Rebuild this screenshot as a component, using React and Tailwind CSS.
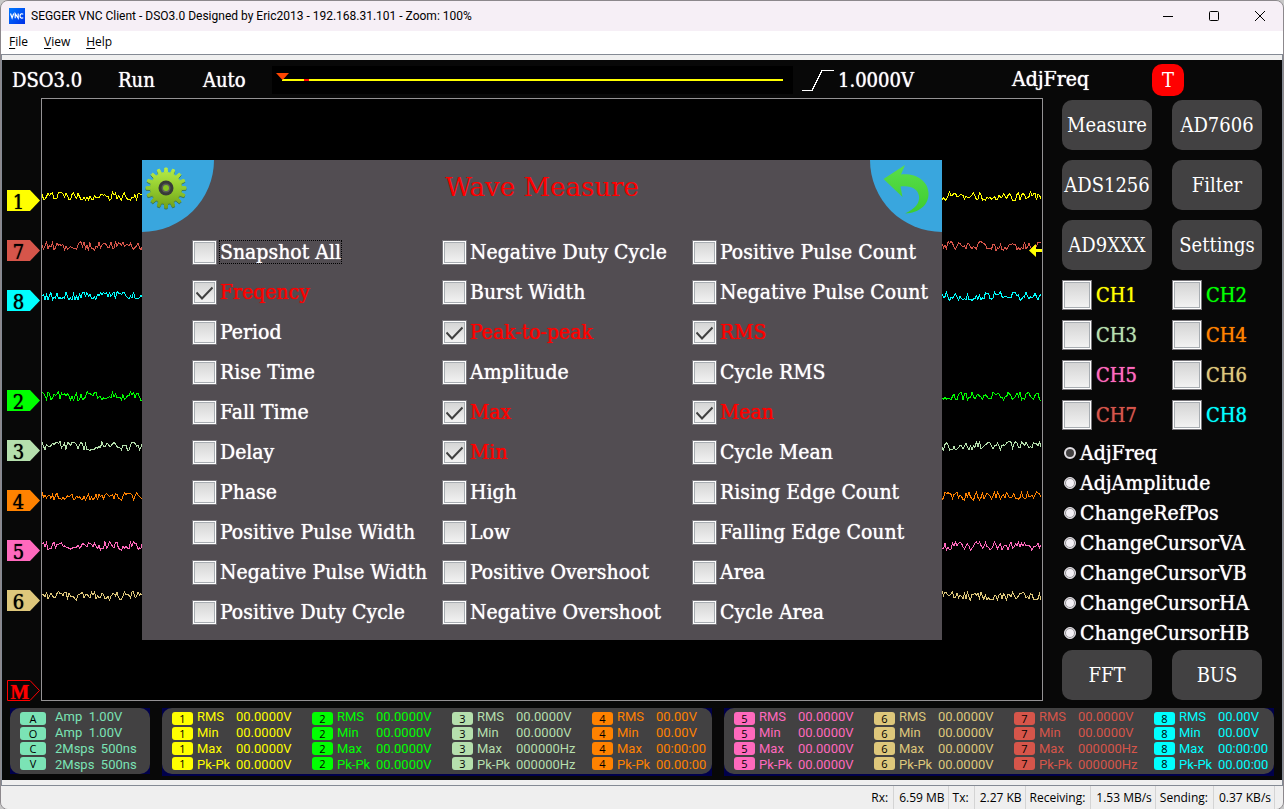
import { useState } from 'react'
import clsx from 'clsx'

const SERIF = "font-['DejaVu_Serif_Condensed','DejaVu_Serif',serif] [text-shadow:0_0_1px]"

const CHANNELS = [
  { id: 1, text: 'text-[#ffff00]', bg: 'bg-[#ffff00]', rows: ['00.0000V', '00.0000V', '00.0000V', '00.0000V'] },
  { id: 2, text: 'text-[#00ff00]', bg: 'bg-[#00ff00]', rows: ['00.0000V', '00.0000V', '00.0000V', '00.0000V'] },
  { id: 3, text: 'text-[#b5dfad]', bg: 'bg-[#b5dfad]', rows: ['00.0000V', '00.0000V', '000000Hz', '000000Hz'] },
  { id: 4, text: 'text-[#ff8200]', bg: 'bg-[#ff8200]', rows: ['00.00V', '00.00V', '00:00:00', '00.00:00'] },
  { id: 5, text: 'text-[#ff69bd]', bg: 'bg-[#ff69bd]', rows: ['00.0000V', '00.0000V', '00.0000V', '00.0000V'] },
  { id: 6, text: 'text-[#dec77b]', bg: 'bg-[#dec77b]', rows: ['00.0000V', '00.0000V', '00.0000V', '00.0000V'] },
  { id: 7, text: 'text-[#d6554a]', bg: 'bg-[#d6554a]', rows: ['00.0000V', '00.0000V', '000000Hz', '000000Hz'] },
  { id: 8, text: 'text-[#00ffff]', bg: 'bg-[#00ffff]', rows: ['00.00V', '00.00V', '00:00:00', '00.00:00'] },
]

// Vertical order of the traces on the screen, null leaves a slot empty
const TRACE_ORDER = [1, 7, 8, null, 2, 3, 4, 5, 6]

const MEASURES = [
  ['Snapshot All', 'Freqency', 'Period', 'Rise Time', 'Fall Time', 'Delay', 'Phase', 'Positive Pulse Width', 'Negative Pulse Width', 'Positive Duty Cycle'],
  ['Negative Duty Cycle', 'Burst Width', 'Peak-to-peak', 'Amplitude', 'Max', 'Min', 'High', 'Low', 'Positive Overshoot', 'Negative Overshoot'],
  ['Positive Pulse Count', 'Negative Pulse Count', 'RMS', 'Cycle RMS', 'Mean', 'Cycle Mean', 'Rising Edge Count', 'Falling Edge Count', 'Area', 'Cycle Area'],
]

const MODES = ['AdjFreq', 'AdjAmplitude', 'ChangeRefPos', 'ChangeCursorVA', 'ChangeCursorVB', 'ChangeCursorHA', 'ChangeCursorHB']

const STATUS = [
  ['Rx:', '6.59 MB'],
  ['Tx:', '2.27 KB'],
  ['Receiving:', '1.53 MB/s'],
  ['Sending:', '0.37 KB/s'],
]

const channel = (id) => CHANNELS.find((c) => c.id === id)

// Small noise generator, so each trace keeps its shape between renders
function noisePoints(seed) {
  let s = seed * 7919 + 17
  let y = 5
  const points = []
  for (let x = 0; x <= 1000; x += 1.5) {
    s = (s * 16807) % 2147483647
    y += (s / 2147483647 - 0.5) * 15
    if (y < 0.5) y = 1 - y
    if (y > 9.5) y = 19 - y
    points.push(`${x},${y.toFixed(1)}`)
  }
  return points.join(' ')
}

function gearPath(teeth, outer, inner) {
  const pts = []
  const step = (Math.PI * 2) / teeth
  for (let i = 0; i < teeth; i++) {
    const a = i * step - Math.PI / 2
    for (const [r, d] of [[inner, -0.26], [outer, -0.15], [outer, 0.15], [inner, 0.26]]) {
      pts.push(`${(24 + r * Math.cos(a + d * step)).toFixed(2)} ${(24 + r * Math.sin(a + d * step)).toFixed(2)}`)
    }
  }
  return `M${pts.join('L')}Z`
}

function TitleBar() {
  return (
    <header className="flex h-[30px] items-center bg-[#f6eff6] pl-2 text-xs text-black">
      <svg className="h-4 w-4" viewBox="0 0 16 16">
        <defs>
          <linearGradient id="vnc" x1="0" y1="0" x2="1" y2="1">
            <stop offset="0" stopColor="#0078ff" />
            <stop offset="1" stopColor="#0030e8" />
          </linearGradient>
        </defs>
        <rect width="16" height="16" fill="url(#vnc)" />
        <path d="M1.500 5.500l1.600 4.500 1.600-4.500M6.200 10.300V5.700l3 4.300V5.500M14.200 6.300c-1-1-3.200-.7-3.200 1.600s2.200 2.700 3.200 1.700" fill="none" stroke="#fff" strokeWidth="1.200" />
      </svg>
      <h1 className="ml-[6px] flex-1 whitespace-nowrap font-['Roboto',sans-serif]">SEGGER VNC Client - DSO3.0 Designed by Eric2013 - 192.168.31.101 - Zoom: 100%</h1>
      <button aria-label="Minimize" className="flex h-full w-[46px] items-center justify-center">
        <svg className="h-[10px] w-[10px]" viewBox="0 0 10 10" stroke="#000"><path d="M0 5.500h10" /></svg>
      </button>
      <button aria-label="Maximize" className="flex h-full w-[46px] items-center justify-center">
        <svg className="h-[10px] w-[10px]" viewBox="0 0 10 10" fill="none" stroke="#000"><rect x=".5" y=".5" width="9" height="9" rx="1" /></svg>
      </button>
      <button aria-label="Close" className="flex h-full w-[46px] items-center justify-center">
        <svg className="h-[10px] w-[10px]" viewBox="0 0 10 10" stroke="#000"><path d="M0 0l10 10M10 0L0 10" /></svg>
      </button>
    </header>
  )
}

function MenuBar() {
  return (
    <nav className="flex h-[23px] items-center gap-4 bg-white pb-px pl-2 text-xs text-black">
      {['File', 'View', 'Help'].map((name) => (
        <button key={name}>
          <span className="underline underline-offset-2">{name[0]}</span>{name.slice(1)}
        </button>
      ))}
    </nav>
  )
}

function ScopeHeader() {
  return (
    <div className="flex h-[38px] items-center pl-[10px] pt-[2px] text-[20px] text-white">
      <span className="w-[106px]">DSO3.0</span>
      <span className="w-[85px]">Run</span>
      <span className="w-[69px]">Auto</span>
      <div className="relative flex h-7 flex-1 items-center bg-black px-[10px]">
        <div className="flex h-[2px] flex-1 bg-[#ffff00] pl-[22px]">
          <span className="w-[5px] bg-[#ff0000]" />
        </div>
        <svg className="absolute left-1 top-[7px] h-[7px] w-[13px]" viewBox="0 0 13 7"><path d="M0 0h13L6.500 7z" fill="#ff4500" /></svg>
      </div>
      <svg className="ml-[9px] h-[22px] w-8" viewBox="0 0 32 22" fill="none" stroke="#fff" shapeRendering="crispEdges">
        <path d="M0 21.500h10L20 1.500h12" />
      </svg>
      <span className="ml-1 w-[174px]">1.0000V</span>
      <span className="w-[140px] text-[21px]">AdjFreq</span>
      <button className="mr-[98px] h-8 w-8 rounded-[10px] bg-[#ff0000]">T</button>
    </div>
  )
}

function Marker({ label, outline, className }) {
  return (
    <div className={clsx('grid h-[21px] w-[33px] grid-rows-[21px]', className)}>
      <svg className="col-start-1 row-start-1 h-[21px] w-[33px]" viewBox="0 0 33 21">
        {outline
          ? <path d="M.5 .5h22.500l9.500 10-9.500 10H.5z" fill="none" stroke="currentColor" />
          : <path d="M0 0h23l10 10.500L23 21H0z" fill="currentColor" />}
      </svg>
      <span
        className={clsx(
          'col-start-1 row-start-1 text-center text-[20px] leading-6',
          outline ? "w-[26px] font-['Liberation_Serif',serif] font-bold text-[#ff0000]" : 'w-[23px] text-black',
        )}
      >
        {label}
      </span>
    </div>
  )
}

function MarkerRail() {
  return (
    <div className="flex w-[39px] flex-col pl-[5px] pt-[92px]">
      {TRACE_ORDER.map((id, i) => (
        <div key={i} className="h-[50px]">
          {id && <Marker label={id} className={channel(id).text} />}
        </div>
      ))}
      <Marker label="M" outline className="mt-auto text-[#ff0000]" />
    </div>
  )
}

function TickBox({ id, size, ...props }) {
  return (
    <span className="grid shrink-0 place-items-center">
      <input
        id={id}
        type="checkbox"
        className={clsx(
          'peer col-start-1 row-start-1 appearance-none border border-[#77757a] bg-linear-to-b from-[#d2d2d2] to-[#f5f5f5] shadow-[inset_0_0_0_1px_#fff,inset_0_0_0_2px_#a8adb2] focus:outline-none',
          size === 'lg' ? 'h-[30px] w-[30px]' : 'h-[25px] w-[25px]',
        )}
        {...props}
      />
      <svg className="pointer-events-none col-start-1 row-start-1 hidden h-[17px] w-[17px] peer-checked:block" viewBox="0 0 17 17" fill="none" stroke="#404040" strokeWidth="2">
        <path d="M.5 8.500l5.500 6L16.500 3.500" />
      </svg>
    </span>
  )
}

function MeasureDialog() {
  const [checked, setChecked] = useState(['Freqency', 'Peak-to-peak', 'RMS', 'Max', 'Mean', 'Min'])

  const toggle = (name) => {
    setChecked((prev) => (prev.includes(name) ? prev.filter((n) => n !== name) : [...prev, name]))
  }

  return (
    <section className="w-[800px] bg-[#524d52] pb-2">
      <div className="flex h-[72px] justify-between">
        <div className="h-[72px] w-[72px] rounded-br-full bg-[#39a6de]">
          <svg className="mt-1 h-12 w-12" viewBox="0 0 48 48" strokeLinejoin="round">
            <defs>
              <linearGradient id="gear" gradientUnits="userSpaceOnUse" x1="0" y1="3" x2="0" y2="45">
                <stop offset="0" stopColor="#b8ee4a" />
                <stop offset=".5" stopColor="#93cc2e" />
                <stop offset="1" stopColor="#6f9f18" />
              </linearGradient>
            </defs>
            <path d={gearPath(16, 20, 15.5)} transform="translate(0 1)" fill="#3f6420" stroke="#3f6420" opacity=".7" />
            <path d={gearPath(16, 20, 15.5)} fill="url(#gear)" stroke="url(#gear)" />
            <circle cx="24" cy="24" r="7.500" fill="#383b38" />
            <circle cx="24" cy="24" r="4.500" fill="#5a5d58" />
            <circle cx="24" cy="24" r="3" fill="#86c41f" />
          </svg>
        </div>
        <h2 className="pt-[11px] font-['DejaVu_Serif',serif] text-[26px] leading-8 text-[#ff0000] [text-shadow:none]">Wave Measure</h2>
        <button aria-label="Back" className="h-[72px] w-[72px] rounded-bl-full bg-[#39a6de]">
          <svg className="h-[72px] w-[72px]" viewBox="0 0 72 72">
            <defs>
              <linearGradient id="back" x1="0" y1="0" x2="0" y2="1">
                <stop offset="0" stopColor="#5ade4a" />
                <stop offset="1" stopColor="#3dcc30" />
              </linearGradient>
            </defs>
            <path d="M13.500 19L35 5l-4 9.500C46 13 58 21 58.500 33 59 45 49 53 35 53.500 45 49 50 43 49 36 48 29 41 25 30.500 26.500L32.500 37z" fill="url(#back)" />
          </svg>
        </button>
      </div>
      <div className="grid grid-cols-[250px_250px_250px] pl-[50px]">
        {MEASURES.map((column, i) => (
          <div key={i}>
            {column.map((name) => {
              const on = checked.includes(name)
              return (
                <div key={name} className="flex h-10 items-center gap-[3px] pt-px">
                  <TickBox id={`measure-${name}`} checked={on} onChange={() => toggle(name)} />
                  <label
                    htmlFor={`measure-${name}`}
                    className={clsx(
                      'whitespace-nowrap text-[21px] leading-[22px]',
                      on ? 'text-[#ff0000]' : 'text-white',
                      name === 'Snapshot All' && 'outline-1 outline-dotted outline-black',
                    )}
                  >
                    {name}
                  </label>
                </div>
              )
            })}
          </div>
        ))}
      </div>
    </section>
  )
}

function Screen() {
  return (
    <div className="relative flex-1 border border-[#949294] bg-black pt-[92px]">
      {TRACE_ORDER.map((id, i) => (
        <div key={i} className="h-[50px]">
          {id && (
            <svg className={clsx('block h-[10px] w-full', channel(id).text)} viewBox="0 0 1000 10" preserveAspectRatio="none" shapeRendering="crispEdges">
              <polyline points={noisePoints(id)} fill="none" stroke="currentColor" />
            </svg>
          )}
        </div>
      ))}
      <svg className="absolute right-0 top-[145px] h-[13px] w-[13px]" viewBox="0 0 13 13"><path d="M0 6.500L7 0v5h6v3H7v5z" fill="#ffff00" /></svg>
      <div className="absolute inset-0 flex items-center justify-center">
        <MeasureDialog />
      </div>
    </div>
  )
}

function PadButton({ children }) {
  return <button className="flex h-[50px] w-[90px] items-center justify-center whitespace-nowrap rounded-[10px] bg-[#424142] text-[20px]">{children}</button>
}

function SidePanel() {
  const [mode, setMode] = useState('AdjFreq')

  return (
    <aside className="w-[239px] pb-px pl-[19px] pt-[2px] text-white">
      <div className="grid grid-cols-[90px_90px] gap-x-5 gap-y-[10px]">
        {['Measure', 'AD7606', 'ADS1256', 'Filter', 'AD9XXX', 'Settings'].map((name) => (
          <PadButton key={name}>{name}</PadButton>
        ))}
      </div>
      <div className="mt-[5px] grid grid-cols-[110px_110px] text-[20px]">
        {CHANNELS.map(({ id, text }) => (
          <div key={id} className="flex h-10 items-center gap-1">
            <TickBox id={`ch-${id}`} size="lg" />
            <label htmlFor={`ch-${id}`} className={text}>CH{id}</label>
          </div>
        ))}
      </div>
      <div className="mt-[3px] text-[21px]">
        {MODES.map((name) => (
          <div key={name} className="flex h-[30px] items-center gap-1 pl-[2px]">
            <input
              id={name}
              type="radio"
              name="mode"
              checked={mode === name}
              onChange={() => setMode(name)}
              className="h-3 w-3 appearance-none rounded-full border border-[#e0dde2] bg-[#f3f0f5] shadow-[inset_0_0_0_1px_#8c8a8e] checked:border-2 checked:bg-[#424142] checked:shadow-none"
            />
            <label htmlFor={name} className="leading-[30px]">{name}</label>
          </div>
        ))}
      </div>
      <div className="mt-[2px] grid grid-cols-[90px_90px] gap-x-5">
        <PadButton>FFT</PadButton>
        <PadButton>BUS</PadButton>
      </div>
    </aside>
  )
}

function Badges({ labels, className }) {
  return (
    <div className="flex flex-col gap-[2px] pt-1">
      {labels.map((label, i) => (
        <span key={i} className={clsx("h-[13px] rounded-[3px] text-center font-['Open_Sans',sans-serif] text-[11px] leading-[14px] text-black", className)}>{label}</span>
      ))}
    </div>
  )
}

function GeneratorPanel() {
  return (
    <div className="w-[140px]">
      <div className="bg-[#00004a]">
        <div className="flex h-[66px] gap-[9px] rounded-[10px] bg-[#424142] pl-[10px] text-[#7be3b5]">
          <Badges labels={['A', 'O', 'C', 'V']} className="w-[26px] bg-[#7be3b5]" />
          <div className="whitespace-pre pt-px text-[13px] leading-4">
            <p>Amp  1.00V</p>
            <p>Amp  1.00V</p>
            <p>2Msps  500ns</p>
            <p>2Msps  500ns</p>
          </div>
        </div>
      </div>
    </div>
  )
}

function ReadoutPanel({ channels }) {
  return (
    <div className="min-w-0 flex-1 bg-[#00004a] pb-[2px]">
      <div className="flex h-[66px] rounded-[10px] bg-[#424142] pl-[10px]">
        {channels.map(({ id, text, bg, rows }) => (
          <div key={id} className={clsx('flex w-[140px] gap-1 last:w-auto', text)}>
            <Badges labels={[id, id, id, id]} className={clsx('w-[21px]', bg)} />
            <table className="mt-px border-collapse self-start text-[13px] leading-4">
              <tbody>
                {['RMS', 'Min', 'Max', 'Pk-Pk'].map((name, i) => (
                  <tr key={name}>
                    <th className="w-[39px] p-0 text-left font-normal whitespace-nowrap">{name}</th>
                    <td className="p-0 whitespace-nowrap">{rows[i]}</td>
                  </tr>
                ))}
              </tbody>
            </table>
          </div>
        ))}
      </div>
    </div>
  )
}

function StatusBar() {
  return (
    <footer className="flex h-[23px] justify-end bg-[#efefef] pr-2 text-xs leading-6 text-black">
      {STATUS.map(([name, value]) => (
        <div key={name} className="flex whitespace-nowrap">
          <span className="border-r border-[#d4d4d4] pl-1 pr-[5px]">{name}</span>
          <span className="border-r border-[#d4d4d4] pl-[5px] pr-[3px]">{value}</span>
        </div>
      ))}
    </footer>
  )
}

export default function App() {
  return (
    <div className="bg-[#c8c8c8] font-['Open_Sans',sans-serif]">
      <div className="overflow-hidden rounded-lg border border-[#8c888c]">
        <TitleBar />
        <MenuBar />
        <div className="border border-[#848a94] bg-[#efefef] py-[5px]">
          <main className="bg-[#080808] pb-1">
            <div className={SERIF}>
              <ScopeHeader />
              <div className="flex">
                <MarkerRail />
                <Screen />
                <SidePanel />
              </div>
            </div>
            <div className="mt-[7px] flex gap-3 px-2 font-['Roboto',sans-serif]">
              <GeneratorPanel />
              <ReadoutPanel channels={CHANNELS.slice(0, 4)} />
              <ReadoutPanel channels={CHANNELS.slice(4)} />
            </div>
          </main>
        </div>
        <StatusBar />
      </div>
    </div>
  )
}
